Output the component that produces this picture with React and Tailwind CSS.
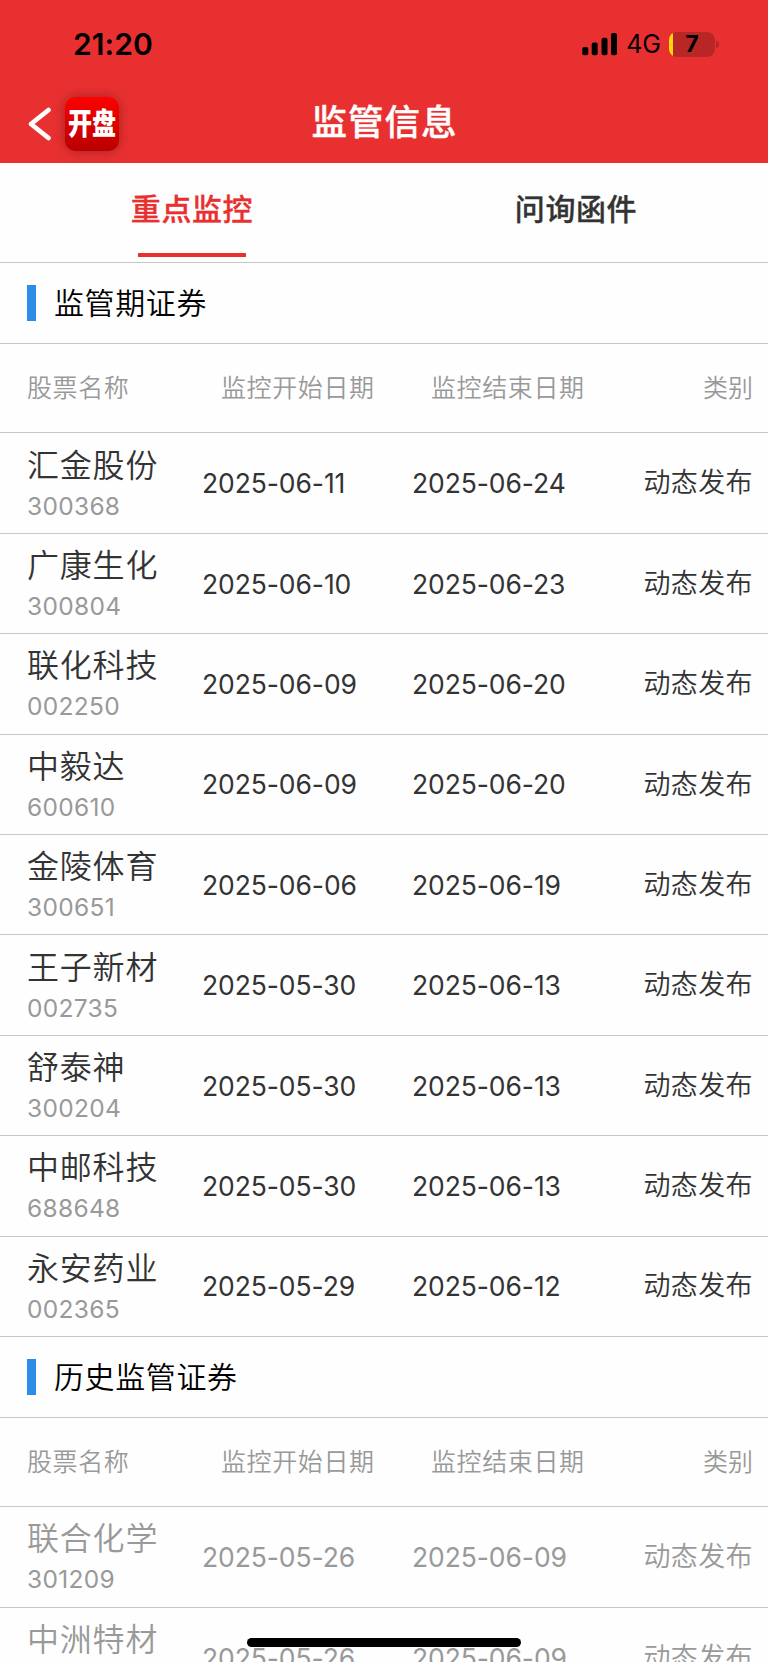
const watching = [
  { name: "汇金股份", code: "300368", start: "2025-06-11", end: "2025-06-24" },
  { name: "广康生化", code: "300804", start: "2025-06-10", end: "2025-06-23" },
  { name: "联化科技", code: "002250", start: "2025-06-09", end: "2025-06-20" },
  { name: "中毅达", code: "600610", start: "2025-06-09", end: "2025-06-20" },
  { name: "金陵体育", code: "300651", start: "2025-06-06", end: "2025-06-19" },
  { name: "王子新材", code: "002735", start: "2025-05-30", end: "2025-06-13" },
  { name: "舒泰神", code: "300204", start: "2025-05-30", end: "2025-06-13" },
  { name: "中邮科技", code: "688648", start: "2025-05-30", end: "2025-06-13" },
  { name: "永安药业", code: "002365", start: "2025-05-29", end: "2025-06-12" },
];

const history = [
  { name: "联合化学", code: "301209", start: "2025-05-26", end: "2025-06-09" },
  { name: "中洲特材", code: "300963", start: "2025-05-26", end: "2025-06-09" },
];

function StatusBar() {
  return (
    <div className="flex h-[88px] items-center justify-between pl-[73px] pr-[49px] text-black">
      <span className="text-[30px] font-semibold leading-10 tracking-[0.1px]">21:20</span>
      <div className="flex items-center">
        <svg width="36" height="24" viewBox="0 0 36 24">
          <rect x="0.3" y="15" width="6" height="8.3" rx="2" />
          <rect x="9.7" y="10.6" width="6" height="12.7" rx="2" />
          <rect x="19.5" y="5.8" width="6" height="17.5" rx="2" />
          <rect x="29" y="1" width="6" height="22.3" rx="2" />
        </svg>
        <span className="ml-2 text-[25px] leading-8">4G</span>
        <div className="ml-2 flex h-[25px] w-[46px] items-center justify-center rounded-[8px] bg-linear-to-r from-[#ffd60a] from-[4px] to-[#b92626] to-[4px]">
          <span className="text-[23px] font-bold leading-[25px]">7</span>
        </div>
        <span className="ml-[1px] h-[7px] w-[3px] rounded-r-full bg-[#b92626]" />
      </div>
    </div>
  );
}

function NavBar() {
  return (
    <div className="grid h-[75px] grid-cols-3 items-center pb-[4px]">
      <div className="flex items-center pl-[27px]">
        <svg width="26" height="36" viewBox="0 0 26 36" fill="none">
          <path
            d="M21.5 4L4 18L21.5 32"
            stroke="white"
            strokeWidth="4.8"
            strokeLinecap="round"
            strokeLinejoin="round"
          />
        </svg>
        <div className="ml-3 flex h-[54px] w-[54px] items-center justify-center rounded-[10px] bg-linear-to-b from-[#ff0000] to-[#b80000] shadow-[0_0_12px_rgba(0,0,0,0.3)]">
          <span className="scale-y-[1.25] whitespace-nowrap text-[24px] font-black leading-none text-white">
            开盘
          </span>
        </div>
      </div>
      <h1 className="pb-[2px] pl-[1px] text-center text-[35.5px] font-medium leading-none tracking-[1px] text-white [-webkit-text-stroke:0.4px]">
        监管信息
      </h1>
    </div>
  );
}

function Tabs() {
  return (
    <div className="grid h-[100px] grid-cols-2 border-b border-[#c8c8c8] text-[30px] font-medium tracking-[0.6px] [-webkit-text-stroke:0.3px]">
      <div className="flex flex-col items-center justify-between pb-[5px] pt-[24px] text-[#e93030]">
        <span className="leading-[44px]">重点监控</span>
        <span className="h-1 w-[108px] bg-[#e93030]" />
      </div>
      <div className="flex flex-col items-center pt-[24px] text-[#333]">
        <span className="leading-[44px]">问询函件</span>
      </div>
    </div>
  );
}

function SectionTitle({ title }) {
  return (
    <div className="flex h-[81px] items-center border-b border-[#c8c8c8] pl-[27px]">
      <span className="h-9 w-[9px] bg-[#2e8ce9]" />
      <h2 className="ml-[18px] text-[30px] font-[350] leading-none tracking-[0.6px] text-black">{title}</h2>
    </div>
  );
}

function TableHead() {
  return (
    <div className="flex h-[89.4px] items-center border-b border-[#c8c8c8] pl-[27px] pr-[15px] pt-[2px] text-[25px] font-[350] tracking-[0.6px] text-[#999]">
      <span className="w-[194px]">股票名称</span>
      <span className="w-[210px]">监控开始日期</span>
      <span>监控结束日期</span>
      <span className="ml-auto tracking-normal">类别</span>
    </div>
  );
}

function Row({ item, past }) {
  return (
    <div
      className={`flex h-[100.4px] shrink-0 items-center border-b border-[#c8c8c8] pl-[27px] pr-[15px] text-[26.5px] ${
        past ? "text-[#999]" : "text-[#333]"
      }`}
    >
      <div className="w-[175px] pb-[1px]">
        <p className="text-[32px] font-[350] leading-[46px] tracking-[0.8px]">{item.name}</p>
        <p className="text-[24.5px] leading-[34px] tracking-[0.3px] text-[#999]">{item.code}</p>
      </div>
      <span className="w-[210px] pt-[2px] tracking-[-0.1px]">{item.start}</span>
      <span className="pt-[2px] tracking-[-0.1px]">{item.end}</span>
      <span className="ml-auto pt-[1px] text-[27px] font-[350] tracking-[0.4px]">动态发布</span>
    </div>
  );
}

function Section({ title, list, past }) {
  return (
    <section>
      <SectionTitle title={title} />
      <TableHead />
      {list.map((item) => (
        <Row key={item.code} item={item} past={past} />
      ))}
    </section>
  );
}

export default function App() {
  return (
    <div className="relative h-[1662px] w-[768px] overflow-hidden bg-[#fefefe] font-['Inter','Noto_Sans_CJK_SC',sans-serif]">
      <header className="bg-[#e93030]">
        <StatusBar />
        <NavBar />
      </header>
      <Tabs />
      <Section title="监管期证券" list={watching} />
      <Section title="历史监管证券" list={history} past />
      <div className="absolute bottom-[15px] left-[247px] h-[9px] w-[274px] rounded-full bg-black" />
    </div>
  );
}
